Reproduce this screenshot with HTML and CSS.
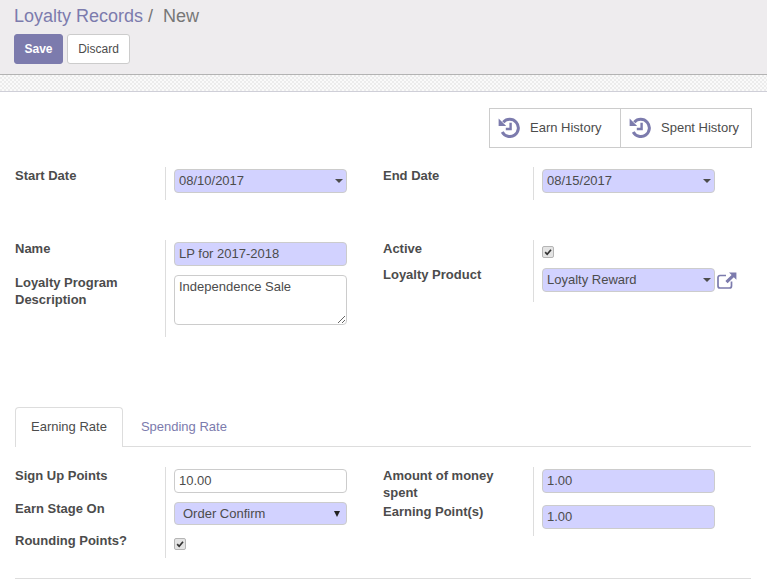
FILE: index.html
```html
<!DOCTYPE html>
<html lang="en">
<head>
    <meta charset="UTF-8">
    <title>Loyalty Records</title>
    <link rel="stylesheet" href="styles.css">
</head>
<body>
    <header class="control-panel">
        <div class="breadcrumb"><a class="crumb-link">Loyalty Records</a><span class="crumb-sep">/</span><span class="crumb-current">New</span></div>
        <div class="actions">
            <button class="btn btn-primary">Save</button>
            <button class="btn btn-default">Discard</button>
        </div>
    </header>
    <div class="strip"></div>

    <main class="sheet">
        <div class="button-box">
            <button class="stat-button">
                <svg class="history-icon" viewBox="0 0 22 22"><path d="M5.3 6.2A8.6 8.6 0 1 1 4.2 16" fill="none" stroke="#7c7bad" stroke-width="3"/><path d="M0.6 2.4V10H8.2Z" fill="#7c7bad"/><path d="M12.6 6.8V13H7.8" fill="none" stroke="#7c7bad" stroke-width="2.4"/></svg>
                <span>Earn History</span>
            </button>
            <button class="stat-button">
                <svg class="history-icon" viewBox="0 0 22 22"><path d="M5.3 6.2A8.6 8.6 0 1 1 4.2 16" fill="none" stroke="#7c7bad" stroke-width="3"/><path d="M0.6 2.4V10H8.2Z" fill="#7c7bad"/><path d="M12.6 6.8V13H7.8" fill="none" stroke="#7c7bad" stroke-width="2.4"/></svg>
                <span>Spent History</span>
            </button>
        </div>

        <!-- dates -->
        <div class="group group-dates">
            <div class="fields">
                <label class="field-label">Start Date</label>
                <div class="field-value"><div class="dropdown"><input class="input required" value="08/10/2017"></div></div>
            </div>
            <div class="fields">
                <label class="field-label">End Date</label>
                <div class="field-value"><div class="dropdown"><input class="input required" value="08/15/2017"></div></div>
            </div>
        </div>

        <!-- program details -->
        <div class="group group-details">
            <div class="fields">
                <label class="field-label">Name</label>
                <div class="field-value tight-bottom"><input class="input required" value="LP for 2017-2018"></div>
                <label class="field-label">Loyalty Program Description</label>
                <div class="field-value textarea-cell"><textarea class="input textarea">Independence Sale</textarea></div>
            </div>
            <div class="fields">
                <label class="field-label">Active</label>
                <div class="field-value check-cell"><span class="checkbox"><svg viewBox="0 0 12 12"><path d="M2.6 6.2L5 8.8L9.6 3.2" fill="none" stroke="#333" stroke-width="2"/></svg></span></div>
                <label class="field-label">Loyalty Product</label>
                <div class="field-value loose-bottom">
                    <div class="with-link">
                        <div class="dropdown"><input class="input required" value="Loyalty Reward"></div>
                        <svg class="external-icon" viewBox="0 0 20 17"><path d="M14.5 9.5V14A2 2 0 0 1 12.5 16H3A2 2 0 0 1 1 14V5.5A2 2 0 0 1 3 3.5H9" fill="none" stroke="#7c7bad" stroke-width="1.7"/><path d="M12 0.4H19.4V7.8L16.8 5.2L10.6 11.2L8.4 9L14.6 3Z" fill="#7c7bad"/></svg>
                    </div>
                </div>
            </div>
        </div>

        <nav class="tabs">
            <a class="tab active">Earning Rate</a>
            <a class="tab">Spending Rate</a>
        </nav>

        <div class="group group-rates">
            <div class="fields">
                <label class="field-label">Sign Up Points</label>
                <div class="field-value"><input class="input" value="10.00"></div>
                <label class="field-label">Earn Stage On</label>
                <div class="field-value"><div class="select-wrap"><select class="input required select"><option>Order Confirm</option></select></div></div>
                <label class="field-label">Rounding Points?</label>
                <div class="field-value check-cell"><span class="checkbox"><svg viewBox="0 0 12 12"><path d="M2.6 6.2L5 8.8L9.6 3.2" fill="none" stroke="#333" stroke-width="2"/></svg></span></div>
            </div>
            <div class="fields">
                <label class="field-label">Amount of money spent</label>
                <div class="field-value loose-bottom"><input class="input required" value="1.00"></div>
                <label class="field-label">Earning Point(s)</label>
                <div class="field-value"><input class="input required" value="1.00"></div>
            </div>
        </div>
        <hr class="rule">
    </main>
</body>
</html>
```

FILE: styles.css
```css
* {
    box-sizing: border-box;
}

body {
    margin: 0;
    font-family: "Liberation Sans", Arial, sans-serif;
    font-size: 13px;
    color: #4c4c4c;
    background-color: #ffffff;
    overflow: hidden;
}

/* top panel */
.control-panel {
    height: 75px;
    padding: 5px 14px 0;
    background-color: #eeecee;
    border-bottom: 1px solid #b3b3b3;
}

.breadcrumb {
    height: 29px;
    font-size: 18px;
    line-height: 22px;
}

.crumb-link {
    color: #7c7bad;
}

.crumb-sep {
    margin: 0 10px 0 5px;
    color: #777777;
}

.crumb-current {
    color: #777777;
}

.actions {
    display: flex;
    gap: 4px;
}

.btn {
    height: 30px;
    border-radius: 3px;
    font-family: inherit;
    font-size: 12px;
    padding: 0;
}

.btn-primary {
    width: 49px;
    background-color: #7c7bad;
    border: 1px solid #7c7bad;
    color: #ffffff;
    font-weight: bold;
}

.btn-default {
    width: 63px;
    background-color: #ffffff;
    border: 1px solid #cccccc;
    color: #4c4c4c;
}

.strip {
    height: 17px;
    background: repeating-conic-gradient(#ececec 0 25%, #fafafa 0 50%) 0 0 / 4px 4px;
    border-bottom: 1px solid #cfcfd8;
}

/* form sheet */
.sheet {
    padding: 16px 15px 0;
}

.button-box {
    display: flex;
    justify-content: flex-end;
}

.stat-button {
    display: flex;
    align-items: center;
    width: 132px;
    height: 40px;
    padding: 0 0 2px 8px;
    background: #ffffff;
    border: 1px solid #cccccc;
    font-family: inherit;
    font-size: 13px;
    color: #4c4c4c;
}

.stat-button + .stat-button {
    margin-left: -1px;
}

.history-icon {
    width: 22px;
    height: 22px;
    margin-right: 10px;
}

.group {
    display: grid;
    grid-template-columns: 368px 368px;
}

.group-dates {
    margin-top: 19px;
}

.group-details {
    margin-top: 40px;
}

.group-rates {
    margin-top: 20px;
}

.fields {
    display: grid;
    grid-template-columns: 150px 218px;
    align-content: start;
}

.field-label {
    font-weight: bold;
    line-height: 17px;
    padding-right: 20px;
}

.field-value {
    border-left: 1px solid #dddddd;
    padding: 2px 0 7px 8px;
}

.tight-bottom {
    padding-bottom: 8px;
}

.loose-bottom {
    padding-bottom: 10px;
}

.textarea-cell {
    padding: 1px 0 12px 8px;
}

.check-cell {
    padding: 6px 0 8px 8px;
    line-height: 0;
}

.input {
    display: block;
    width: 173px;
    height: 24px;
    padding: 0 4px 2px;
    border: 1px solid #cccccc;
    border-radius: 4px;
    background-color: #ffffff;
    font-family: inherit;
    font-size: 13px;
    color: #4c4c4c;
}

.required {
    background-color: #d2d2ff;
}

.textarea {
    height: 50px;
    padding: 3px 4px;
}

.select {
    height: 23px;
    padding: 0 4px 0 8px;
    appearance: none;
}

.dropdown,
.select-wrap {
    position: relative;
    width: 173px;
}

/* carets sit over the input */
.dropdown::after {
    content: "";
    position: absolute;
    right: 4px;
    top: 10px;
    border-top: 4px solid #4c4c4c;
    border-left: 4px solid transparent;
    border-right: 4px solid transparent;
}

.select-wrap::after {
    content: "";
    position: absolute;
    right: 7px;
    top: 9px;
    border-top: 6px solid #222222;
    border-left: 3px solid transparent;
    border-right: 3px solid transparent;
}

.with-link {
    display: flex;
    align-items: center;
}

.external-icon {
    width: 20px;
    height: 17px;
    margin-left: 2px;
}

.checkbox {
    display: inline-block;
    width: 12px;
    height: 12px;
    border: 1px solid #b5b5b5;
    border-radius: 2px;
    background-color: #e4e4e4;
}

.checkbox svg {
    display: block;
    width: 10px;
    height: 10px;
}

/* tabs */
.tabs {
    display: flex;
    gap: 2px;
    width: 736px;
    height: 40px;
    margin-top: 70px;
    border-bottom: 1px solid #dddddd;
}

.tab {
    height: 40px;
    padding: 11px 16px 0;
    line-height: 17px;
    color: #7c7bad;
}

.tab.active {
    background-color: #ffffff;
    border: 1px solid #dddddd;
    border-bottom: none;
    border-radius: 4px 4px 0 0;
    padding: 10px 15px 0;
    color: #4c4c4c;
}

.rule {
    width: 736px;
    margin: 20px 0 0;
    border: none;
    border-top: 1px solid #dddddd;
}
```
